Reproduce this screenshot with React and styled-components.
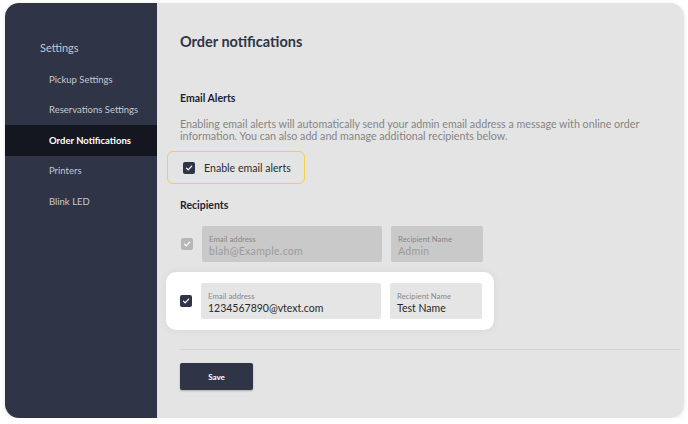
import styled, { createGlobalStyle } from "styled-components";

const Global = createGlobalStyle`
  html, body { margin: 0; padding: 0; background: #ffffff; }
  body { font-family: Lato, "Noto Sans", sans-serif; }
  * { box-sizing: border-box; }
`;

const navItems = [
  "Pickup Settings",
  "Reservations Settings",
  "Order Notifications",
  "Printers",
  "Blink LED",
];

function Check({ disabled }) {
  return (
    <CheckBox $disabled={disabled}>
      <svg width="8" height="8" viewBox="0 0 10 10">
        <path d="M1.8 5.2 L4 7.3 L8.3 2.6" fill="none" stroke="#fff" strokeWidth="1.6" strokeLinecap="round" strokeLinejoin="round" />
      </svg>
    </CheckBox>
  );
}

function Field({ label, value, wide, disabled }) {
  return (
    <FieldBox $wide={wide} $disabled={disabled}>
      <FieldLabel>{label}</FieldLabel>
      <FieldValue $disabled={disabled}>{value}</FieldValue>
    </FieldBox>
  );
}

export default function App() {
  return (
    <>
      <Global />
      <Card>
        <Sidebar>
          <SideTitle>Settings</SideTitle>
          {navItems.map((item) => (
            <NavItem key={item} $active={item === "Order Notifications"}>
              {item}
            </NavItem>
          ))}
        </Sidebar>
        <Main>
          <Title>Order notifications</Title>
          <SectionTitle>Email Alerts</SectionTitle>
          <Description>
            Enabling email alerts will automatically send your admin email address a message with online order
            <br />
            information. You can also add and manage additional recipients below.
          </Description>
          <EnableBox>
            <Check />
            <EnableText>Enable email alerts</EnableText>
          </EnableBox>
          <RecipientsTitle>Recipients</RecipientsTitle>
          <RecipientRow>
            <Check disabled />
            <Field label="Email address" value="blah@Example.com" wide disabled />
            <Field label="Recipient Name" value="Admin" disabled />
          </RecipientRow>
          <RecipientCard>
            <Check />
            <Field label="Email address" value="1234567890@vtext.com" wide />
            <Field label="Recipient Name" value="Test Name" />
          </RecipientCard>
          <Divider />
          <SaveButton>Save</SaveButton>
        </Main>
      </Card>
    </>
  );
}

const Card = styled.div`
  display: flex;
  width: 679px;
  height: 415px;
  margin: 3px 0 0 5px;
  border-radius: 14px;
  overflow: hidden;
  box-shadow: 0 1px 4px rgba(0, 0, 0, 0.12);
`;

const Sidebar = styled.nav`
  width: 152px;
  flex-shrink: 0;
  background: #2f3546;
  padding-top: 37px;
`;

const SideTitle = styled.div`
  padding-left: 35px;
  height: 16px;
  line-height: 16px;
  font-size: 11px;
  color: #c3c6ce;
  margin-bottom: 8px;
`;

const NavItem = styled.div`
  height: 30.5px;
  display: flex;
  align-items: center;
  padding-left: 44px;
  font-size: 9.5px;
  font-weight: ${(p) => (p.$active ? 700 : 400)};
  color: ${(p) => (p.$active ? "#ffffff" : "#c5c8d0")};
  background: ${(p) => (p.$active ? "#14171f" : "transparent")};
`;

const Main = styled.main`
  flex: 1;
  background: #e4e4e4;
  padding: 30px 4px 0 23px;
  display: flex;
  flex-direction: column;
  align-items: flex-start;
`;

const Title = styled.h1`
  margin: 0;
  font-size: 14.5px;
  line-height: 18px;
  font-weight: 700;
  color: #2f3546;
`;

const SectionTitle = styled.h2`
  margin: 40px 0 0;
  font-size: 10.5px;
  line-height: 14px;
  font-weight: 700;
  color: #1f2330;
`;

const Description = styled.p`
  margin: 13px 0 0;
  font-size: 10.7px;
  line-height: 12px;
  color: #858585;
`;

const EnableBox = styled.label`
  display: flex;
  align-items: center;
  gap: 9px;
  margin: 9px 0 0 -13px;
  width: 138px;
  height: 33px;
  padding-left: 15px;
  border: 1.5px solid #f3cf4a;
  border-radius: 6px;
`;

const EnableText = styled.span`
  font-size: 10.6px;
  color: #2c2c2c;
`;

const CheckBox = styled.span`
  width: 12px;
  height: 12px;
  flex-shrink: 0;
  border-radius: 2px;
  background: ${(p) => (p.$disabled ? "#b7b7b7" : "#2f3546")};
  display: flex;
  align-items: center;
  justify-content: center;
`;

const RecipientsTitle = styled(SectionTitle)`
  margin-top: 14px;
`;

const RecipientRow = styled.div`
  display: flex;
  align-items: center;
  margin: 14px 0 0 1px;
  gap: 9px;
`;

const RecipientCard = styled.div`
  display: flex;
  align-items: center;
  gap: 9px;
  margin: 10px 0 0 -14px;
  padding: 11px 12px 11px 14px;
  background: #ffffff;
  border-radius: 10px;
  box-shadow: 0 0 8px rgba(0, 0, 0, 0.06);
`;

const FieldBox = styled.div`
  width: ${(p) => (p.$wide ? "180px" : "92px")};
  height: 36px;
  padding: 8px 7px 0;
  border-radius: 2px;
  background: ${(p) => (p.$disabled ? "#c9c9c9" : "#e5e5e5")};
  display: flex;
  flex-direction: column;
`;

const FieldLabel = styled.span`
  font-size: 7.8px;
  line-height: 10px;
  color: #878787;
`;

const FieldValue = styled.span`
  font-size: 10.5px;
  line-height: 14px;
  color: ${(p) => (p.$disabled ? "#9b9b9b" : "#2a2a2a")};
  letter-spacing: ${(p) => (p.$disabled ? "0.3px" : "0")};
`;

const Divider = styled.hr`
  align-self: stretch;
  margin: 19px 0 0;
  border: none;
  border-top: 1.5px solid #d3d3d3;
`;

const SaveButton = styled.button`
  margin-top: 13px;
  width: 73px;
  height: 27px;
  border: none;
  border-radius: 2px;
  background: #2f3546;
  box-shadow: 0 1px 2px rgba(0, 0, 0, 0.25);
  color: #ffffff;
  font-family: Lato, "Noto Sans", sans-serif;
  font-size: 8px;
  font-weight: 700;
`;
